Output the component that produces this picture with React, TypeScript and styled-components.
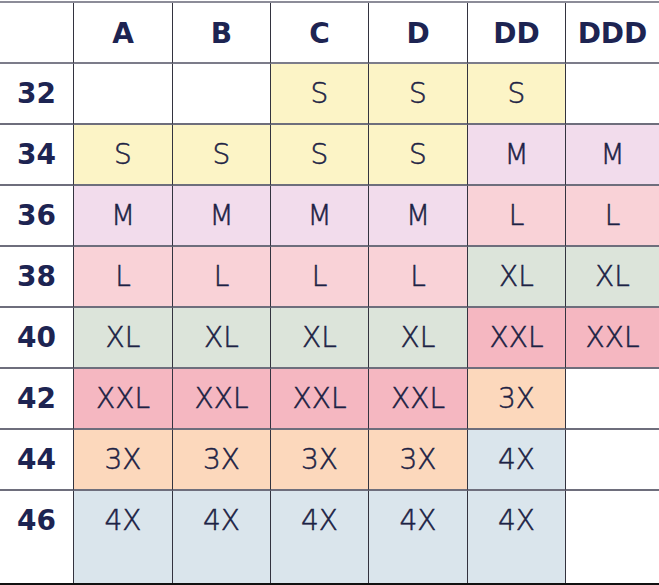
import React from 'react';
import styled, { createGlobalStyle } from 'styled-components';

type Tone = 'yellow' | 'lilac' | 'pink' | 'green' | 'rose' | 'peach' | 'blue' | 'none';

const TONES: Record<Tone, string> = {
  yellow: '#fcf4c6',
  lilac: '#f2dcec',
  pink: '#f9d2d7',
  green: '#dce4da',
  rose: '#f5b7c1',
  peach: '#fcd8bc',
  blue: '#dae5ec',
  none: '#ffffff',
};

const SIZE_TONE: Record<string, Tone> = {
  S: 'yellow',
  M: 'lilac',
  L: 'pink',
  XL: 'green',
  XXL: 'rose',
  '3X': 'peach',
  '4X': 'blue',
};

const CUPS = ['A', 'B', 'C', 'D', 'DD', 'DDD'];

const ROWS: { band: string; sizes: string[] }[] = [
  { band: '32', sizes: ['', '', 'S', 'S', 'S', ''] },
  { band: '34', sizes: ['S', 'S', 'S', 'S', 'M', 'M'] },
  { band: '36', sizes: ['M', 'M', 'M', 'M', 'L', 'L'] },
  { band: '38', sizes: ['L', 'L', 'L', 'L', 'XL', 'XL'] },
  { band: '40', sizes: ['XL', 'XL', 'XL', 'XL', 'XXL', 'XXL'] },
  { band: '42', sizes: ['XXL', 'XXL', 'XXL', 'XXL', '3X', ''] },
  { band: '44', sizes: ['3X', '3X', '3X', '3X', '4X', ''] },
  { band: '46', sizes: ['4X', '4X', '4X', '4X', '4X', ''] },
];

const SizeChart = () => {
  return (
    <Page>
      <Chart>
        <HeadCell $last={false} />
        {CUPS.map((cup, i) => (
          <HeadCell key={cup} $last={i === CUPS.length - 1}>
            {cup}
          </HeadCell>
        ))}
        {ROWS.map((row, r) => {
          const lastRow = r === ROWS.length - 1;
          return (
            <React.Fragment key={row.band}>
              <BandCell $lastRow={lastRow}>{row.band}</BandCell>
              {row.sizes.map((size, c) => (
                <SizeCell
                  key={c}
                  $tone={size ? SIZE_TONE[size] : 'none'}
                  $lastRow={lastRow}
                  $lastCol={c === row.sizes.length - 1}
                >
                  {size}
                </SizeCell>
              ))}
            </React.Fragment>
          );
        })}
      </Chart>
    </Page>
  );
};

const App = () => (
  <>
    <GlobalStyle />
    <SizeChart />
  </>
);

const GlobalStyle = createGlobalStyle`
  html, body {
    margin: 0;
    padding: 0;
    background: #ffffff;
  }
`;

const Page = styled.div`
  width: 659px;
  height: 585px;
  padding-top: 1px;
  box-sizing: border-box;
  overflow: hidden;
`;

const Chart = styled.div`
  display: grid;
  grid-template-columns: 74px 99px 98px 98px 99px 98px 1fr;
  grid-template-rows: 61px repeat(7, 61px) 1fr;
  height: 584px;
  box-sizing: border-box;
  border-top: 2px solid #8c8c98;
  border-bottom: 2px solid #111111;
  color: #1c2244;
`;

const BaseCell = styled.div`
  display: flex;
  justify-content: center;
  align-items: flex-start;
  box-sizing: border-box;
  line-height: 59px;
`;

const HeadCell = styled(BaseCell)<{ $last: boolean }>`
  font-family: 'DejaVu Sans', 'Liberation Sans', sans-serif;
  font-weight: 700;
  font-size: 28px;
  line-height: 62px;
  color: #1d2452;
  background: #ffffff;
  border-bottom: 2px solid #7c7c8a;
  border-right: ${(p) => (p.$last ? 'none' : '1px solid #33333f')};
`;

const BandCell = styled(BaseCell)<{ $lastRow: boolean }>`
  font-family: 'DejaVu Sans', 'Liberation Sans', sans-serif;
  font-weight: 700;
  font-size: 28px;
  color: #1d2452;
  background: #ffffff;
  border-right: 1px solid #33333f;
  border-bottom: ${(p) => (p.$lastRow ? 'none' : '2px solid #6e6e7c')};
`;

const SizeCell = styled(BaseCell)<{ $tone: Tone; $lastRow: boolean; $lastCol: boolean }>`
  font-family: 'DejaVu Sans', 'Liberation Sans', sans-serif;
  font-weight: 200;
  font-size: 28px;
  -webkit-text-stroke: 0.5px #1c2244;
  background: ${(p) => TONES[p.$tone]};
  border-right: ${(p) => (p.$lastCol ? 'none' : '1px solid #33333f')};
  border-bottom: ${(p) => (p.$lastRow ? 'none' : '2px solid #6e6e7c')};
`;

export default App;
